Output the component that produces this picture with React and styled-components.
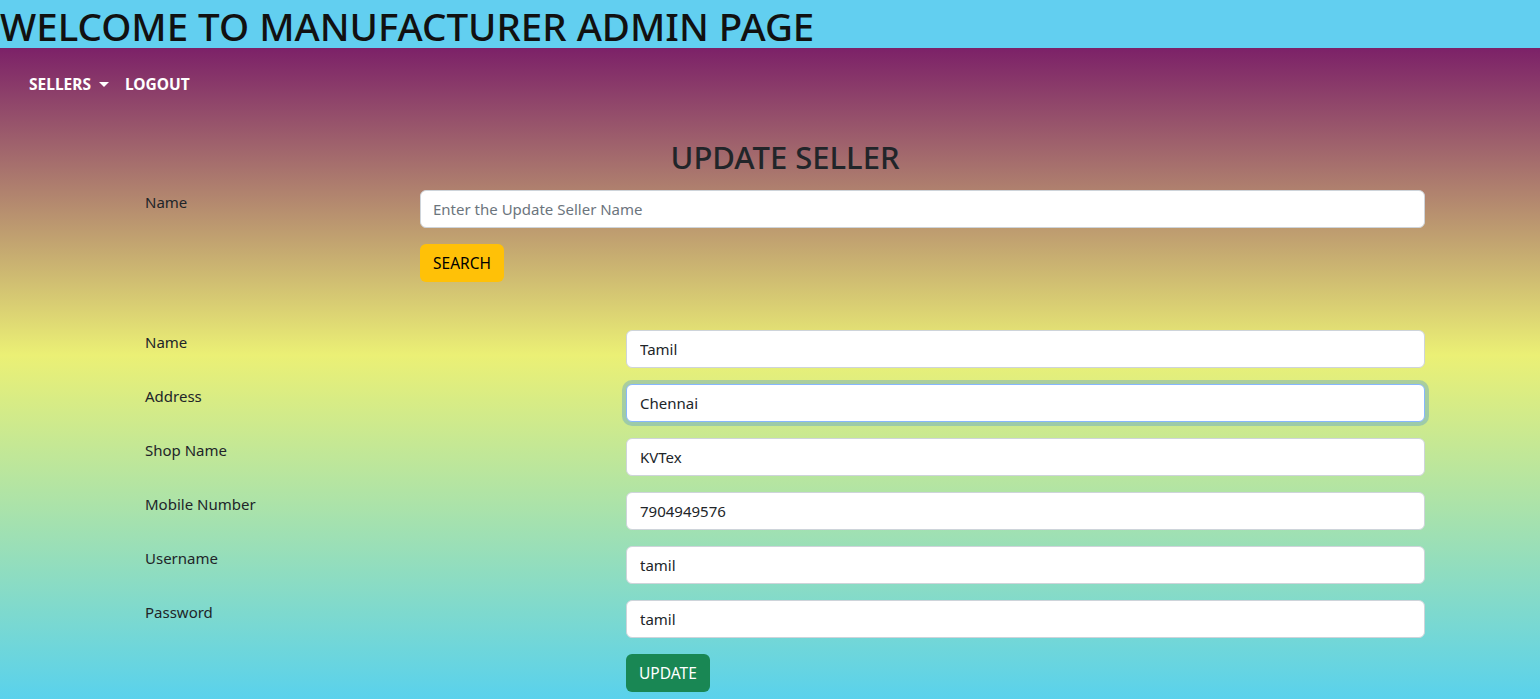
import React from "react";
import styled, { createGlobalStyle } from "styled-components";

const GlobalStyle = createGlobalStyle`
  * { box-sizing: border-box; }
  body {
    margin: 0;
    font-family: "Segoe UI", "Noto Sans", "Open Sans", sans-serif;
    color: #212529;
  }
`;

const Banner = styled.header`
  background: #62cff0;
  padding-top: 4px;
  h1 {
    margin: 0;
    font-size: 38.5px;
    font-weight: 500;
    line-height: 44px;
    color: #111;
    white-space: nowrap;
  }
`;

const Page = styled.main`
  min-height: calc(100vh - 48px);
  background: linear-gradient(#7c2168 0%, #ebf075 46%, #52d0f2 100%);
  padding-bottom: 8px;
`;

const Navbar = styled.nav`
  display: flex;
  align-items: center;
  gap: 16px;
  padding: 24px 29px 16px;
  a {
    color: #fff;
    font-weight: 700;
    font-size: 15.5px;
    line-height: 24px;
    text-decoration: none;
    display: flex;
    align-items: center;
  }
`;

const Caret = styled.span`
  display: inline-block;
  margin-left: 8px;
  border-top: 5px solid #fff;
  border-left: 5px solid transparent;
  border-right: 5px solid transparent;
`;

const Container = styled.section`
  width: 1280px;
  margin-left: 145px;
`;

const Heading = styled.h2`
  margin: 26px 0 14px;
  text-align: center;
  font-size: 31px;
  font-weight: 500;
  line-height: 38px;
  color: #212529;
`;

const Row = styled.div`
  display: grid;
  grid-template-columns: ${(p) => p.$label}px 1fr;
  margin-bottom: ${(p) => p.$gap || 16}px;
`;

const Label = styled.label`
  font-size: 15px;
  line-height: 24px;
  color: #212529;
`;

const Field = styled.div`
  display: flex;
  flex-direction: column;
  align-items: flex-start;
  gap: 16px;
`;

const Input = styled.input`
  width: 100%;
  height: 38px;
  padding: 6px ${(p) => p.$pad || 12}px;
  font: inherit;
  font-size: 15px;
  color: #212529;
  background: #fff;
  border: 1px solid ${(p) => (p.$focused ? "#86b7fe" : "#ced4da")};
  border-radius: 6px;
  box-shadow: ${(p) => (p.$focused ? "0 0 0 4px rgba(13,110,253,.25)" : "none")};
  outline: none;
  &::placeholder { color: #6c757d; }
`;

const Button = styled.button`
  height: 38px;
  padding: 6px 13px;
  font: inherit;
  font-size: 15.5px;
  border: none;
  border-radius: 6px;
  background: ${(p) => (p.$variant === "success" ? "#198754" : "#ffc107")};
  color: ${(p) => (p.$variant === "success" ? "#fff" : "#000")};
`;

const fields = [
  ["Name", "Tamil"],
  ["Address", "Chennai"],
  ["Shop Name", "KVTex"],
  ["Mobile Number", "7904949576"],
  ["Username", "tamil"],
  ["Password", "tamil"],
];

export default function App() {
  return (
    <>
      <GlobalStyle />
      <Banner>
        <h1>WELCOME TO MANUFACTURER ADMIN PAGE</h1>
      </Banner>
      <Page>
        <Navbar>
          <a href="#">
            SELLERS
            <Caret />
          </a>
          <a href="#">LOGOUT</a>
        </Navbar>
        <Container>
          <Heading>UPDATE SELLER</Heading>
          <Row $label={275} $gap={48}>
            <Label>Name</Label>
            <Field>
              <Input placeholder="Enter the Update Seller Name" />
              <Button>SEARCH</Button>
            </Field>
          </Row>
          {fields.map(([label, value]) => (
            <Row $label={481} key={label}>
              <Label>{label}</Label>
              <Input
                $pad={13}
                defaultValue={value}
                $focused={label === "Address"}
              />
            </Row>
          ))}
          <Row $label={481}>
            <span />
            <Field>
              <Button $variant="success">UPDATE</Button>
            </Field>
          </Row>
        </Container>
      </Page>
    </>
  );
}
